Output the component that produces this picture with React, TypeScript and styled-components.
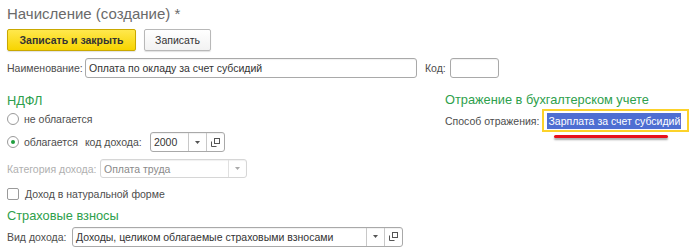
import React from "react";
import styled, { createGlobalStyle } from "styled-components";

const Global = createGlobalStyle`
  html, body { margin: 0; padding: 0; background: #fff; }
  body { font-family: "Liberation Sans", Arial, sans-serif; font-size: 10.5px; color: #4d4d4d; }
`;

const Page = styled.div`
  width: 691px;
  height: 250px;
  overflow: hidden;
  padding: 0 0 0 7px;
  box-sizing: border-box;
`;

const Title = styled.div`
  font-size: 15px;
  color: #6a6a6a;
  height: 28px;
  line-height: 24px;
  padding-top: 2px;
  box-sizing: border-box;
`;

const Toolbar = styled.div`
  display: flex;
  gap: 8px;
  height: 30px;
  margin-top: 1px;
`;

const Button = styled.button<{ $primary?: boolean }>`
  height: 22px;
  padding: 0 10px;
  font-family: inherit;
  font-size: 10.5px;
  font-weight: ${(p) => (p.$primary ? 700 : 400)};
  color: #333;
  border-radius: 2px;
  border: 1px solid ${(p) => (p.$primary ? "#c9a800" : "#b8b8b8")};
  background: ${(p) =>
    p.$primary
      ? "linear-gradient(#ffe84d, #f7d400)"
      : "linear-gradient(#ffffff, #f2f2f2)"};
  box-shadow: 0 1px 1px rgba(0, 0, 0, 0.12);
  cursor: pointer;
  width: ${(p) => (p.$primary ? "129px" : "67px")};
`;

const Row = styled.div<{ $h?: number }>`
  display: flex;
  align-items: center;
  height: ${(p) => p.$h ?? 24}px;
`;

const Label = styled.span<{ $w?: number; $gap?: number; $lead?: number; $disabled?: boolean }>`
  color: ${(p) => (p.$disabled ? "#b0b0b0" : "#4d4d4d")};
  margin-right: ${(p) => p.$gap ?? 4}px;
  margin-left: ${(p) => p.$lead ?? 0}px;
  white-space: nowrap;
  ${(p) => (p.$w ? `width: ${p.$w}px;` : "")}
`;

const Input = styled.div<{ $w: number; $disabled?: boolean }>`
  width: ${(p) => p.$w}px;
  height: ${(p) => (p.$disabled ? 19 : 20)}px;
  box-sizing: border-box;
  border: 1px solid ${(p) => (p.$disabled ? "#d6d6d6" : "#a9a9a9")};
  border-radius: 3px;
  display: flex;
  align-items: center;
  background: #fff;
  color: ${(p) => (p.$disabled ? "#8a8a8a" : "#333")};
  overflow: hidden;
  box-shadow: inset 0 1px 1px rgba(0, 0, 0, 0.06);
  flex-shrink: 0;
`;

const InputText = styled.span`
  flex: 1;
  padding-left: 3px;
  white-space: nowrap;
  overflow: hidden;
`;

const Btn = styled.span<{ $w?: number; $disabled?: boolean }>`
  width: ${(p) => p.$w ?? 17}px;
  height: 100%;
  border-left: 1px solid ${(p) => (p.$disabled ? "#e0e0e0" : "#c8c8c8")};
  display: flex;
  align-items: center;
  justify-content: center;
  color: ${(p) => (p.$disabled ? "#aaa" : "#555")};
  flex-shrink: 0;
`;

const Columns = styled.div`
  display: flex;
`;

const LeftCol = styled.div`
  width: 438px;
  flex-shrink: 0;
  display: flex;
  flex-direction: column;
`;

const RightCol = styled.div`
  flex: 1;
  min-width: 0;
  display: flex;
  flex-direction: column;
`;

const Heading = styled.div<{ $h?: number }>`
  color: #2ea04c;
  font-size: 12.8px;
  height: ${(p) => p.$h ?? 20}px;
  display: flex;
  align-items: flex-end;
  line-height: 15px;
`;

const Radio = styled.span<{ $checked?: boolean }>`
  width: 12px;
  height: 12px;
  box-sizing: border-box;
  border: 1px solid #9a9a9a;
  border-radius: 50%;
  margin-right: 5px;
  display: inline-flex;
  align-items: center;
  justify-content: center;
  background: #fff;
  &::after {
    content: "";
    width: 4px;
    height: 4px;
    border-radius: 50%;
    background: ${(p) => (p.$checked ? "#1f9e3e" : "transparent")};
  }
`;

const Check = styled.span`
  width: 12px;
  height: 12px;
  box-sizing: border-box;
  border: 1px solid #9a9a9a;
  border-radius: 2px;
  margin-right: 6px;
  background: #fff;
`;

const FocusField = styled.div`
  position: relative;
  flex: 1;
  height: 23px;
  box-sizing: border-box;
  border: 2px solid #fcd22a;
  margin-right: 2px;
  display: flex;
  align-items: center;
  padding-left: 3px;
`;

const Selected = styled.span`
  background: #4e6ed2;
  color: #fff;
  padding: 1px 1px;
  line-height: 14px;
  white-space: nowrap;
`;

const RedMark = styled.span`
  position: absolute;
  left: 10px;
  top: 24px;
  width: 114px;
  height: 3px;
  border-radius: 2px;
  background: #e8101a;
  box-shadow: 0 2px 2px rgba(0, 0, 0, 0.35);
`;

const Caret = () => (
  <svg width="5" height="3" viewBox="0 0 5 3">
    <path d="M0 0h5L2.5 3z" fill="currentColor" />
  </svg>
);

const OpenIcon = () => (
  <svg width="9" height="9" viewBox="0 0 9 9" fill="none" stroke="currentColor" strokeWidth="1">
    <rect x="3.5" y="0.5" width="5" height="5" />
    <path d="M0.5 3.5v5h5" />
  </svg>
);

export default function App() {
  return (
    <Page>
      <Global />
      <Title>Начисление (создание) *</Title>
      <Toolbar>
        <Button $primary>Записать и закрыть</Button>
        <Button>Записать</Button>
      </Toolbar>
      <Row $h={20} style={{ marginTop: -1 }}>
        <Label $w={74} $gap={4}>Наименование:</Label>
        <Input $w={332}>
          <InputText>Оплата по окладу за счет субсидий</InputText>
        </Input>
        <Label $w={21} $lead={8}>Код:</Label>
        <Input $w={49} />
      </Row>
      <Columns>
        <LeftCol>
          <Heading $h={30}>НДФЛ</Heading>
          <Row $h={21}>
            <Radio />
            <Label>не облагается</Label>
          </Row>
          <Row $h={26}>
            <Radio $checked />
            <Label $gap={7}>облагается</Label>
            <Label $w={61} $gap={4}>код дохода:</Label>
            <Input $w={75}>
              <InputText>2000</InputText>
              <Btn>
                <Caret />
              </Btn>
              <Btn>
                <OpenIcon />
              </Btn>
            </Input>
          </Row>
          <Row $h={27}>
            <Label $w={90} $disabled $gap={3}>Категория дохода:</Label>
            <Input $w={147} $disabled>
              <InputText>Оплата труда</InputText>
              <Btn $disabled>
                <Caret />
              </Btn>
            </Input>
          </Row>
          <Row $h={23}>
            <Check />
            <Label>Доход в натуральной форме</Label>
          </Row>
          <Heading $h={18}>Страховые взносы</Heading>
          <Row $h={27}>
            <Label $w={62} $gap={3}>Вид дохода:</Label>
            <Input $w={331}>
              <InputText>Доходы, целиком облагаемые страховыми взносами</InputText>
              <Btn>
                <Caret />
              </Btn>
              <Btn>
                <OpenIcon />
              </Btn>
            </Input>
          </Row>
        </LeftCol>
        <RightCol>
          <Heading $h={29}>Отражение в бухгалтерском учете</Heading>
          <Row $h={27}>
            <Label $gap={3}>Способ отражения:</Label>
            <FocusField>
              <Selected>Зарплата за счет субсидий</Selected>
              <RedMark />
            </FocusField>
          </Row>
        </RightCol>
      </Columns>
    </Page>
  );
}
